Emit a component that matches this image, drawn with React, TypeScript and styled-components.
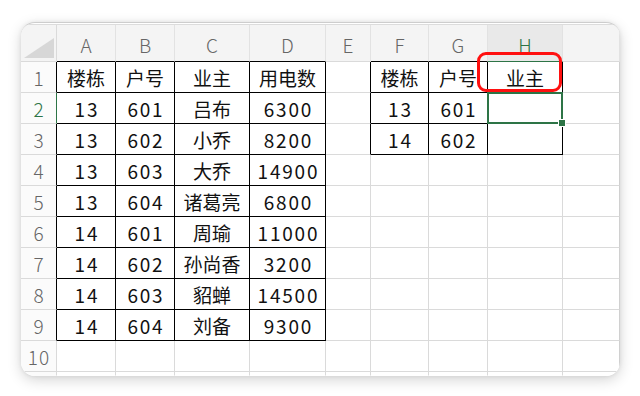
import React from 'react';
import styled, { createGlobalStyle } from 'styled-components';

const Global = createGlobalStyle`
  html, body { margin: 0; padding: 0; background: #ffffff; }
  body { font-family: "Noto Sans CJK SC", "Noto Sans", sans-serif; }
  * { box-sizing: border-box; }
`;

const GREEN = '#2d7446';
const GRID = '#dadada';
const INK = '#111111';

const Page = styled.div`
  width: 640px;
  height: 396px;
  padding: 22px 0 0 21px;
`;

const Card = styled.div`
  width: 599px;
  height: 354px;
  background: #ffffff;
  border-radius: 14px;
  border-top: 1px solid #cdcdcd;
  padding-top: 1px;
  box-shadow: 0 4px 14px rgba(0, 0, 0, 0.17), 0 0 4px rgba(0, 0, 0, 0.08);
  overflow: hidden;
`;

const Sheet = styled.div`
  display: grid;
  grid-template-columns: 36px 59px 59px 75px 76px 45px 58px 59px 75px 1fr;
  grid-template-rows: 37px repeat(10, 31px) 1fr;
  height: 100%;
  border-top: 1px solid #dcdcdc;
`;

type Kind = 'corner' | 'col' | 'row' | 'data';

const Cell = styled.div<{
  $kind: Kind;
  $right: string;
  $bottom: string;
  $active?: boolean;
  $numeric?: boolean;
}>`
  position: relative;
  display: flex;
  align-items: center;
  justify-content: center;
  border-right: 1px solid ${(p) => p.$right};
  border-bottom: 1px solid ${(p) => p.$bottom};
  background: ${(p) =>
    p.$kind === 'col' || p.$kind === 'corner'
      ? p.$active
        ? '#e9e9e9'
        : '#f4f4f4'
      : p.$kind === 'row'
      ? '#fbfbfb'
      : '#ffffff'};
  color: ${(p) => (p.$kind === 'data' ? INK : p.$active ? GREEN : '#666666')};
  font-size: 19px;
  font-weight: ${(p) => (p.$kind === 'data' ? 400 : 300)};
  letter-spacing: ${(p) => (p.$numeric ? '1.8px' : p.$kind === 'row' ? '1px' : '0')};
  text-indent: ${(p) => (p.$numeric ? '1.8px' : p.$kind === 'row' ? '1px' : '0')};
  white-space: nowrap;
  line-height: 1;
  padding-top: ${(p) => (p.$kind === 'col' ? '2px' : '0')};
`;

const CornerMark = styled.div`
  position: absolute;
  right: 2px;
  bottom: 3px;
  width: 30px;
  height: 20px;
  background: #d7d7d7;
  clip-path: polygon(100% 0, 100% 100%, 0 100%);
`;

const ActiveBox = styled.div`
  position: absolute;
  left: -1px;
  top: -1px;
  right: -1px;
  bottom: -1px;
  border: 2px solid ${GREEN};
  z-index: 3;
  pointer-events: none;
`;

const FillHandle = styled.div`
  position: absolute;
  right: -4px;
  bottom: -4px;
  width: 6px;
  height: 6px;
  background: ${GREEN};
  outline: 1px solid #ffffff;
`;

const RedMark = styled.div`
  position: absolute;
  left: -11px;
  top: -10px;
  right: 0;
  bottom: 0;
  border: 3.5px solid #ff1010;
  border-radius: 9px;
  z-index: 4;
  pointer-events: none;
`;

const letters = ['A', 'B', 'C', 'D', 'E', 'F', 'G', 'H', ''];

const rows: string[][] = [
  ['楼栋', '户号', '业主', '用电数', '', '楼栋', '户号', '业主', ''],
  ['13', '601', '吕布', '6300', '', '13', '601', '', ''],
  ['13', '602', '小乔', '8200', '', '14', '602', '', ''],
  ['13', '603', '大乔', '14900', '', '', '', '', ''],
  ['13', '604', '诸葛亮', '6800', '', '', '', '', ''],
  ['14', '601', '周瑜', '11000', '', '', '', '', ''],
  ['14', '602', '孙尚香', '3200', '', '', '', '', ''],
  ['14', '603', '貂蝉', '14500', '', '', '', '', ''],
  ['14', '604', '刘备', '9300', '', '', '', '', ''],
  ['', '', '', '', '', '', '', '', ''],
];

// r: 1..10 sheet rows, c: 1..9 columns (A..I)
const inTable = (r: number, c: number) =>
  (r >= 1 && r <= 9 && c >= 1 && c <= 4) || (r >= 1 && r <= 3 && c >= 6 && c <= 8);

const ACTIVE_R = 2;
const ACTIVE_C = 8;

export default function App() {
  const cells: React.ReactNode[] = [];

  cells.push(
    <Cell key="corner" $kind="corner" $right={GRID} $bottom={GRID}>
      <CornerMark />
    </Cell>
  );
  letters.forEach((l, i) => {
    const c = i + 1;
    const active = c === ACTIVE_C;
    const bottom = active ? GREEN : inTable(1, c) ? '#000' : GRID;
    cells.push(
      <Cell key={`h${c}`} $kind="col" $active={active} $right="#e2e2e2" $bottom={bottom}>
        {l}
      </Cell>
    );
  });

  for (let r = 1; r <= 11; r++) {
    const active = r === ACTIVE_R;
    const rowRight = active ? GREEN : inTable(r, 1) ? '#000' : GRID;
    const rowBottom = r === 11 ? 'transparent' : GRID;
    cells.push(
      <Cell key={`r${r}`} $kind="row" $active={active} $right={rowRight} $bottom={rowBottom}>
        {r <= 10 ? r : ''}
      </Cell>
    );
    for (let c = 1; c <= 9; c++) {
      const own = inTable(r, c);
      const right = own || inTable(r, c + 1) ? '#000' : GRID;
      const bottom = r === 11 ? 'transparent' : own || inTable(r + 1, c) ? '#000' : GRID;
      const text = r <= 10 ? rows[r - 1][c - 1] : '';
      const isActive = r === ACTIVE_R && c === ACTIVE_C;
      const isMarked = r === 1 && c === 8;
      cells.push(
        <Cell
          key={`c${r}-${c}`}
          $kind="data"
          $numeric={/^\d+$/.test(text)}
          $right={c === 9 ? '#d0d0d0' : right}
          $bottom={bottom}
        >
          {text}
          {isActive && (
            <ActiveBox>
              <FillHandle />
            </ActiveBox>
          )}
          {isMarked && <RedMark />}
        </Cell>
      );
    }
  }

  return (
    <Page>
      <Global />
      <Card>
        <Sheet>{cells}</Sheet>
      </Card>
    </Page>
  );
}
